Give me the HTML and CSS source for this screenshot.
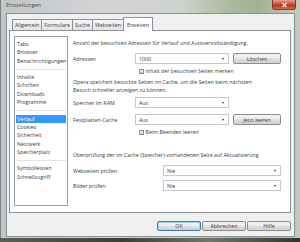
FILE: index.html
```html
<!DOCTYPE html>
<html lang="de">
<head>
<meta charset="utf-8">
<title>Einstellungen</title>
<link rel="stylesheet" href="styles.css">
</head>
<body>
<div class="window">
  <div class="titlebar">
    <span class="title">Einstellungen</span>
    <div class="close"><svg width="9" height="6" viewBox="0 0 9 6"><path d="M2.5 1 L6.5 5 M6.5 1 L2.5 5" stroke="#fff" stroke-width="1.3"/></svg></div>
  </div>
  <div class="client">
    <div class="tabs">
      <div class="tab">Allgemein</div>
      <div class="tab">Formulare</div>
      <div class="tab">Suche</div>
      <div class="tab">Webseiten</div>
      <div class="tab active">Erweitert</div>
    </div>
    <div class="panel">
      <ul class="list">
        <li>Tabs</li>
        <li>Browser</li>
        <li>Benachrichtigungen</li>
        <li class="sep"></li>
        <li>Inhalte</li>
        <li>Schriften</li>
        <li>Downloads</li>
        <li>Programme</li>
        <li class="sep"></li>
        <li class="selected">Verlauf</li>
        <li>Cookies</li>
        <li>Sicherheit</li>
        <li>Netzwerk</li>
        <li>Speicherplatz</li>
        <li class="sep"></li>
        <li>Symbolleisten</li>
        <li>Schnellzugriff</li>
      </ul>
      <div class="settings">
        <p class="intro">Anzahl der besuchten Adressen für Verlauf und Autovervollständigung.</p>
        <div class="row r-addr">
          <span class="label">Adressen</span>
          <div class="select s-mid"><span>1000</span><i class="arrow"></i></div>
          <div class="btn">Löschen</div>
        </div>
        <div class="check c-1"><span class="box"><svg width="5" height="5" viewBox="0 0 5 5"><path d="M0.8 2.6 L2 3.8 L4.3 1" fill="none" stroke="#4a6a9a" stroke-width="0.9"/></svg></span>Inhalt der besuchten Seiten merken</div>
        <p class="para">Opera speichert besuchte Seiten im Cache, um die Seiten beim nächsten<br>Besuch schneller anzeigen zu können.</p>
        <div class="row r-ram">
          <span class="label">Speicher im RAM</span>
          <div class="select s-mid"><span>Aus</span><i class="arrow"></i></div>
        </div>
        <div class="row r-disk">
          <span class="label">Festplatten-Cache</span>
          <div class="select s-mid"><span>Aus</span><i class="arrow"></i></div>
          <div class="btn">Jetzt leeren</div>
        </div>
        <div class="check c-2"><span class="box"><svg width="5" height="5" viewBox="0 0 5 5"><path d="M0.8 2.6 L2 3.8 L4.3 1" fill="none" stroke="#4a6a9a" stroke-width="0.9"/></svg></span>Beim Beenden leeren</div>
        <p class="check-title">Überprüfung der im Cache (Speicher) vorhandenen Seite auf Aktualisierung</p>
        <div class="row r-web">
          <span class="label wide">Webseiten prüfen</span>
          <div class="select s-wide"><span>Nie</span><i class="arrow"></i></div>
        </div>
        <div class="row r-img">
          <span class="label wide">Bilder prüfen</span>
          <div class="select s-wide"><span>Nie</span><i class="arrow"></i></div>
        </div>
      </div>
    </div>
    <div class="buttons">
      <div class="btn dlg default">OK</div>
      <div class="btn dlg">Abbrechen</div>
      <div class="btn dlg">Hilfe</div>
    </div>
  </div>
</div>
</body>
</html>
```
FILE: styles.css
```css
* { box-sizing: border-box; }
html, body { margin: 0; padding: 0; }
body {
  width: 300px;
  height: 242px;
  overflow: hidden;
  background: linear-gradient(90deg, #5b5f5a 0%, #3a3d38 40%, #6d7866 70%, #2f352c 100%);
  font-family: "Open Sans", "DejaVu Sans", sans-serif;
  font-size: 5.3px;
  color: #3a3a3a;
}
.window {
  position: relative;
  width: 300px;
  height: 238px;
  background: linear-gradient(90deg, #c3c6c9 0%, #d2d4d6 35%, #cfd3cf 60%, #a9b89c 78%, #9fb391 86%, #c3cac0 100%);
  padding: 0 5px 1px 5px;
  display: flex;
  flex-direction: column;
  border-left: 1px solid #7d8286;
}
.titlebar {
  height: 15px;
  display: flex;
  align-items: center;
}
.title {
  font-size: 5.6px;
  color: #4a4a4a;
  margin-top: -3px;
}
.close {
  position: absolute;
  top: 0;
  right: 4px;
  width: 24px;
  height: 10px;
  border: 1px solid #8a3a30;
  border-top: none;
  border-radius: 0 0 3px 3px;
  background: linear-gradient(#e8a090 0%, #d2503a 45%, #b8301c 55%, #d86a4c 100%);
  display: flex;
  align-items: center;
  justify-content: center;
}
.client {
  flex: 1;
  background: #f0f0f0;
  border: 1px solid #8b9096;
  padding: 2px 3px 5px 2px;
  display: flex;
  flex-direction: column;
}
.tabs {
  display: flex;
  align-items: flex-end;
  height: 14px;
  padding-left: 3px;
  position: relative;
  z-index: 1;
}
.tab {
  height: 11px;
  padding: 0 2px;
  border: 1px solid #8e9198;
  border-bottom: none;
  border-radius: 1px 1px 0 0;
  background: linear-gradient(#f6f6f6, #e4e4e4);
  margin-right: -1px;
  display: flex;
  align-items: center;
  white-space: nowrap;
}
.tab.active {
  height: 14px;
  background: #fff;
  margin-bottom: -1px;
  padding: 0 3px;
  position: relative;
}
.panel {
  height: 183px;
  border: 1px solid #8e9198;
  background: #fff;
  padding: 5px 9px 6px 4px;
  display: flex;
  gap: 5px;
}
.list {
  list-style: none;
  margin: 0;
  padding: 3px 1px 0 1px;
  width: 54px;
  height: 170px;
  border: 1px solid #9a9ea5;
  flex: none;
}
.list li {
  height: 8.3px;
  line-height: 8.3px;
  padding-left: 1px;
  white-space: nowrap;
}
.list li.sep { position: relative; }
.list li.sep::after {
  content: "";
  position: absolute;
  left: 0;
  right: 0;
  top: 4px;
  border-top: 1px solid #e2e2e2;
}
.list li.selected {
  background: #3399ff;
  color: #fff;
}
.settings {
  flex: 1;
  display: flex;
  flex-direction: column;
}
.settings p { margin: 0; white-space: nowrap; }
.intro { margin-top: 4px !important; line-height: 7px; }
.row {
  display: flex;
  align-items: center;
  height: 11px;
}
.label { width: 62px; flex: none; white-space: nowrap; }
.label.wide { width: 90px; }
.r-addr { margin-top: 6px; }
.select {
  height: 11px;
  border: 1px solid #c4c8cc;
  background: #fff;
  display: flex;
  align-items: center;
  padding: 0 4px 0 3px;
  justify-content: space-between;
}
.s-mid { width: 94px; }
.s-wide { width: 118px; }
.arrow {
  width: 0;
  height: 0;
  border-left: 1.5px solid transparent;
  border-right: 1.5px solid transparent;
  border-top: 2px solid #333;
}
.btn {
  height: 11px;
  border: 1px solid #8c8c8c;
  border-radius: 2px;
  background: linear-gradient(#f4f4f4 0%, #ebebeb 48%, #dcdcdc 52%, #d2d2d2 100%);
  display: flex;
  align-items: center;
  justify-content: center;
  white-space: nowrap;
}
.row .btn { width: 48px; margin-left: 4px; }
.check {
  display: flex;
  align-items: center;
  height: 6px;
  margin-left: 66px;
  white-space: nowrap;
}
.c-1 { margin-top: 4px; }
.box {
  width: 5px;
  height: 5px;
  border: 0.5px solid #8f8f8f;
  background: linear-gradient(#e8e8e8, #fafafa);
  margin-right: 1.5px;
  display: flex;
  flex: none;
}
.para { margin-top: 5px !important; line-height: 7.5px; }
.r-ram { margin-top: 3px; }
.r-disk { margin-top: 6px; }
.c-2 { margin-top: 4px; }
.check-title { margin-top: 17px !important; line-height: 7px; }
.r-web { margin-top: 6px; }
.r-img { margin-top: 4px; }
.buttons {
  display: flex;
  justify-content: flex-end;
  gap: 1px;
  margin-top: 8px;
}
.btn.dlg {
  width: 44px;
  height: 10px;
}
.btn.default {
  border-color: #3c7fb1;
  box-shadow: inset 0 0 0 1px #9ed6f6;
}
```
